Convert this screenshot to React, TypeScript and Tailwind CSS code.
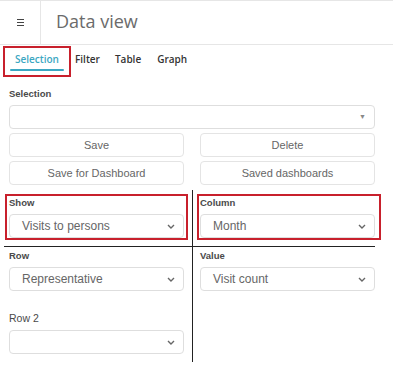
import React from "react";

const Chevron = () => (
  <svg width="8" height="5" viewBox="0 0 8 5" className="shrink-0">
    <path d="M1 1 L4 4 L7 1" fill="none" stroke="#666" strokeWidth="1.4" />
  </svg>
);

const Select = ({ value }: { value?: string }) => (
  <div className="h-[24px] border border-[#dedede] rounded-[4px] flex items-center justify-between pl-[12px] pr-[8px] bg-white">
    <span className="text-[12px] text-[#666] leading-none">{value ?? ""}</span>
    <Chevron />
  </div>
);

const Label = ({ children, bold = true }: { children: React.ReactNode; bold?: boolean }) => (
  <div
    className={`leading-[12px] text-[#4a4a4a] ${bold ? "font-bold text-[9.5px]" : "font-normal text-[10.5px]"}`}
  >
    {children}
  </div>
);

const Btn = ({ children }: { children: React.ReactNode }) => (
  <div className="h-[24px] border border-[#e4e4e4] rounded-[4px] flex items-center justify-center text-[11px] text-[#666]">
    {children}
  </div>
);

export default function App() {
  return (
    <div
      className="relative w-[393px] h-[375px] bg-white overflow-hidden"
      style={{ fontFamily: '"Liberation Sans", Arial, sans-serif' }}
    >
      {/* header */}
      <div className="h-[45px] border-t border-b border-[#e6e6e6] flex">
        <div className="w-[41px] border-r border-[#e6e6e6] flex items-center justify-center">
          <div className="flex flex-col gap-[1.5px] pl-[1px]">
            <div className="w-[7px] h-[1.5px] bg-[#444]" />
            <div className="w-[7px] h-[1.5px] bg-[#444]" />
            <div className="w-[7px] h-[1.5px] bg-[#444]" />
          </div>
        </div>
        <div
          className="pl-[15px] flex items-center text-[18px] text-[#6b6b6b] pb-[2px]"
          style={{ fontFamily: '"Open Sans", sans-serif' }}
        >
          Data view
        </div>
      </div>

      {/* tabs */}
      <div
        className="h-[32px] flex items-start pl-[10px] text-[10px] font-semibold text-[#333]"
        style={{ fontFamily: '"Open Sans", sans-serif' }}
      >
        <div className="relative w-[54px] h-full flex justify-center pt-[7px] text-[#3ba7c2]">
          Selection
          <div className="absolute left-0 right-0 top-[24px] h-[2px] rounded-full bg-[#3ba7c2]" />
        </div>
        <div className="pt-[7px] ml-[11px]">Filter</div>
        <div className="pt-[7px] ml-[15px]">Table</div>
        <div className="pt-[7px] ml-[16px]">Graph</div>
      </div>

      {/* selection block */}
      <div className="pl-[9px] w-[375px]">
        <div className="mt-[11px]">
          <Label>Selection</Label>
        </div>
        <div className="mt-[5px] h-[24px] border border-[#dedede] rounded-[4px] flex items-center justify-end pr-[8px]">
          <span className="text-[7px] text-[#888]">▼</span>
        </div>
        <div className="grid grid-cols-2 gap-x-[16px] gap-y-[4px] mt-[4px]">
          <Btn>Save</Btn>
          <Btn>Delete</Btn>
          <Btn>Save for Dashboard</Btn>
          <Btn>Saved dashboards</Btn>
        </div>
      </div>

      {/* bottom section */}
      <div className="relative flex pl-[9px] mt-[5px] w-[375px]">
        <div className="w-[175px] shrink-0">
          <div className="pt-[7px]">
            <Label>Show</Label>
          </div>
          <div className="mt-[5px]">
            <Select value="Visits to persons" />
          </div>
          <div className="h-[12px]" />
          <Label>Row</Label>
          <div className="mt-[5px]">
            <Select value="Representative" />
          </div>
          <div className="h-[21px]" />
          <Label bold={false}>Row 2</Label>
          <div className="mt-[6px]">
            <Select />
          </div>
          <div className="h-[8px]" />
        </div>
        <div className="w-[16px] shrink-0 flex justify-center">
          <div className="w-[1px] bg-[#222] h-full" />
        </div>
        <div className="w-[175px] shrink-0">
          <div className="pt-[7px]">
            <Label>Column</Label>
          </div>
          <div className="mt-[5px]">
            <Select value="Month" />
          </div>
          <div className="h-[12px]" />
          <Label>Value</Label>
          <div className="mt-[5px]">
            <Select value="Visit count" />
          </div>
        </div>
        {/* horizontal divider */}
        <div className="absolute left-[4px] right-0 top-[56px] h-[1px] bg-[#222]" />
      </div>

      {/* annotation boxes */}
      <div className="absolute left-[3px] top-[46px] w-[68px] h-[31px] border-2 border-[#c8202c] pointer-events-none" />
      <div className="absolute left-[5px] top-[194px] w-[183px] h-[46px] border-2 border-[#c8202c] pointer-events-none" />
      <div className="absolute left-[197px] top-[194px] w-[184px] h-[46px] border-2 border-[#c8202c] pointer-events-none" />
    </div>
  );
}
